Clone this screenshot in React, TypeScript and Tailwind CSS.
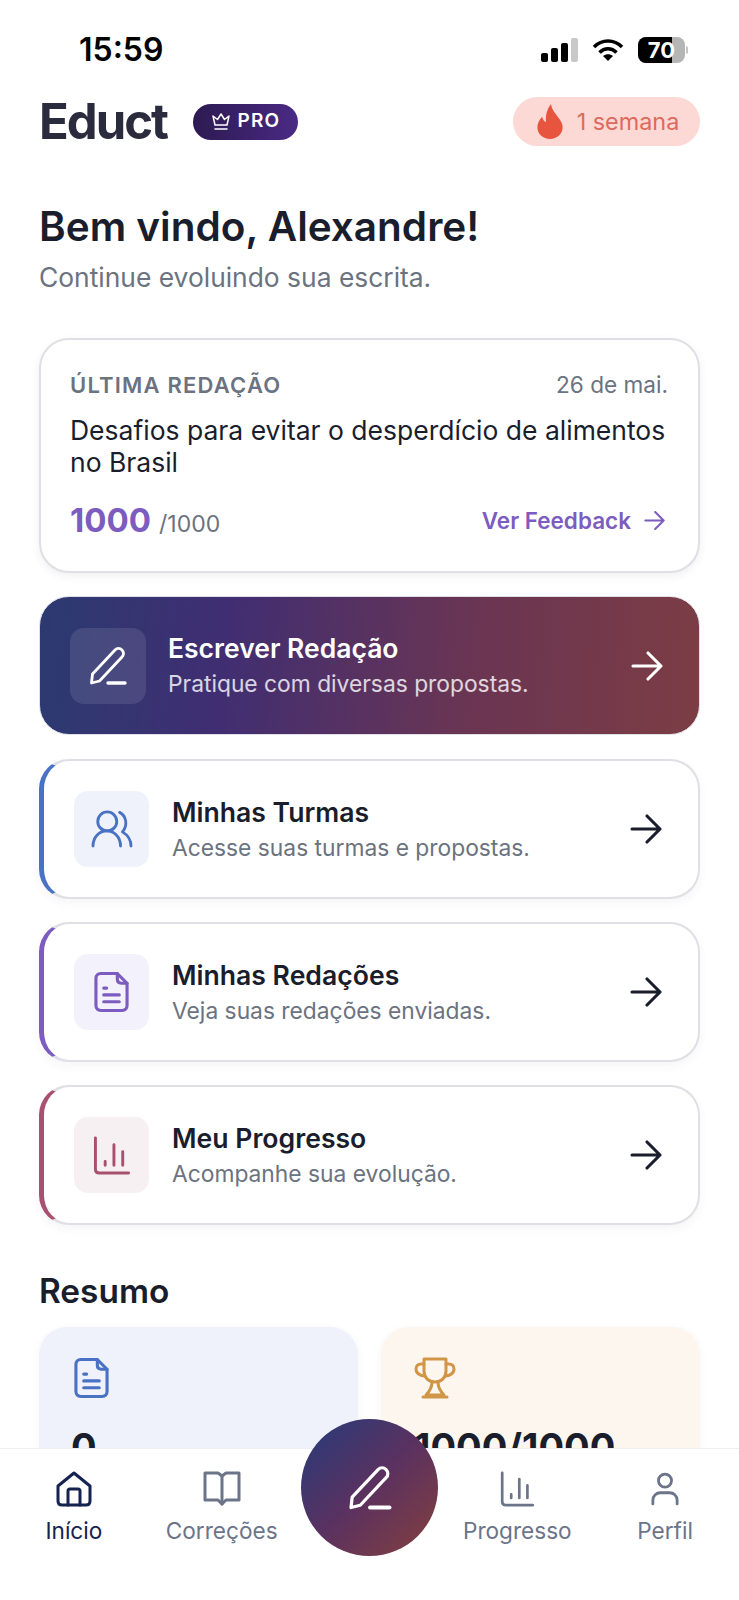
import React from "react";

const PenIcon = ({ className }: { className?: string }) => (
  <svg viewBox="0 0 40 40" fill="none" stroke="currentColor" strokeWidth="2.8" strokeLinecap="round" strokeLinejoin="round" className={className}>
    <path d="M3.5 37 L4.5 28 L27 4 C29 2 32 2 34 4 C36 6 36 9 34 11 L11.5 35 Z" />
    <path d="M20 37 H37" strokeWidth="3.4" />
  </svg>
);

const ArrowIcon = ({ className }: { className?: string }) => (
  <svg viewBox="0 0 32 32" fill="none" stroke="currentColor" strokeWidth="3.1" strokeLinecap="round" strokeLinejoin="round" className={className}>
    <path d="M2 16 H30 M17 3 L30 16 L17 29" />
  </svg>
);

const UsersIcon = ({ className }: { className?: string }) => (
  <svg viewBox="0 0 44 40" fill="none" stroke="currentColor" strokeWidth="3" strokeLinecap="round" strokeLinejoin="round" className={className}>
    <circle cx="17" cy="12" r="10" />
    <path d="M2 38 C2 28 9 22 16.5 22 C24 22 31 28 31 38" />
    <path d="M30 2.5 C37 6 39 16 33 23 C38 26 42 31 42 38" />
  </svg>
);

const FileIcon = ({ className }: { className?: string }) => (
  <svg viewBox="0 0 36 42" fill="none" stroke="currentColor" strokeWidth="3.2" strokeLinecap="round" strokeLinejoin="round" className={className}>
    <path d="M7 2 H24 L34 12 V35 C34 38 32 40 29 40 H7 C4 40 2 38 2 35 V7 C2 4 4 2 7 2 Z" />
    <path d="M24 2 V8 C24 10.5 25.5 12 28 12 H34" />
    <path d="M10 17 H13 M10 24 H26 M10 31 H26" />
  </svg>
);

const ChartIcon = ({ className }: { className?: string }) => (
  <svg viewBox="0 0 38 40" fill="none" stroke="currentColor" strokeWidth="3" strokeLinecap="round" strokeLinejoin="round" className={className}>
    <path d="M2 2 V34 C2 36.5 3.5 38 6 38 H36" />
    <path d="M12 26 V30 M21 9 V30 M30 16 V30" />
  </svg>
);

const HomeIcon = ({ className }: { className?: string }) => (
  <svg viewBox="0 0 36 36" fill="none" stroke="currentColor" strokeWidth="3" strokeLinecap="round" strokeLinejoin="round" className={className}>
    <path d="M2 15 L18 2 L34 15 V30 C34 32.5 32.5 34 30 34 H6 C3.5 34 2 32.5 2 30 Z" />
    <path d="M12 34 V20 C12 18.5 13 18 14 18 H22 C23 18 24 18.5 24 20 V34" />
  </svg>
);

const BookIcon = ({ className }: { className?: string }) => (
  <svg viewBox="0 0 38 36" fill="none" stroke="currentColor" strokeWidth="3" strokeLinecap="round" strokeLinejoin="round" className={className}>
    <path d="M2 2 H15 L19 5 L23 2 H36 V29 H23 L19 33 L15 29 H2 Z" />
    <path d="M19 5 V33" />
  </svg>
);

const UserIcon = ({ className }: { className?: string }) => (
  <svg viewBox="0 0 30 36" fill="none" stroke="currentColor" strokeWidth="3" strokeLinecap="round" strokeLinejoin="round" className={className}>
    <circle cx="15" cy="9" r="7" />
    <path d="M2 34 V30 C2 25 6 22 10 22 H20 C24 22 28 25 28 30 V34" />
  </svg>
);

const TrophyIcon = ({ className }: { className?: string }) => (
  <svg viewBox="0 0 42 42" fill="none" stroke="currentColor" strokeWidth="3" strokeLinecap="round" strokeLinejoin="round" className={className}>
    <path d="M10 2 H32 V14 C32 21 27 25 21 25 C15 25 10 21 10 14 Z" />
    <path d="M10 7 H7 C4 7 2 9 2 12 C2 16 6 19 11 19 M32 7 H35 C38 7 40 9 40 12 C40 16 36 19 31 19" />
    <path d="M18 25 C18 30 16 34 12 38 H30 C26 34 24 30 24 25" />
    <path d="M9 40 H33" />
  </svg>
);

const CrownIcon = ({ className }: { className?: string }) => (
  <svg viewBox="0 0 20 20" fill="none" stroke="currentColor" strokeWidth="1.5" strokeLinecap="round" strokeLinejoin="round" className={className}>
    <path d="M4 13 L2 4 L6.5 7.5 L10 2 L13.5 7.5 L18 4 L16 13 Z" />
    <path d="M4 17 H16" />
  </svg>
);

const FlameIcon = ({ className }: { className?: string }) => (
  <svg viewBox="0 0 28 36" fill="currentColor" className={className}>
    <path d="M15 0 C16 6 19 9 22 13 C25 17 27 20 27 24 C27 31 21 36 14 36 C7 36 1 31 1 24 C1 20 3 16 6 13 C6.5 16 8 18 10 18.5 C9 12 11 5 15 0 Z" />
  </svg>
);

const actions = [
  { title: "Minhas Turmas", subtitle: "Acesse suas turmas e propostas.", icon: UsersIcon, iconSize: "w-[42px] h-[38px]", border: "border-l-[#4a72c4]", tile: "bg-[#eff2fb]", color: "text-[#4a72c4]" },
  { title: "Minhas Redações", subtitle: "Veja suas redações enviadas.", icon: FileIcon, iconSize: "w-[35px] h-[42px]", border: "border-l-[#7c5cbf]", tile: "bg-[#f3f1fb]", color: "text-[#7c5cbf]" },
  { title: "Meu Progresso", subtitle: "Acompanhe sua evolução.", icon: ChartIcon, iconSize: "w-[38px] h-[39px]", border: "border-l-[#a8506f]", tile: "bg-[#f7f0f3]", color: "text-[#a8506f]" },
];

export default function App() {
  return (
    <div className="relative w-[739px] h-[1600px] overflow-hidden flex flex-col bg-white text-[#1a1d2b] font-['Inter',sans-serif]">
      <div className="flex-1 min-h-0 overflow-hidden px-[39px]">
        {/* status bar */}
        <div className="h-[97px] flex items-center justify-between pl-[40px] pr-[12px] pt-[3px]">
          <span className="text-[32px] font-semibold text-black">15:59</span>
          <div className="flex items-center gap-[14px]">
            <div className="flex items-end gap-[3px] h-[24px]">
              <span className="w-[7px] h-[9px] rounded-[2px] bg-black" />
              <span className="w-[7px] h-[14px] rounded-[2px] bg-black" />
              <span className="w-[7px] h-[19px] rounded-[2px] bg-black" />
              <span className="w-[7px] h-[24px] rounded-[2px] bg-[#c8c8c8]" />
            </div>
            <svg viewBox="0 0 32 24" className="w-[32px] h-[24px]" fill="none" stroke="black" strokeWidth="3.6">
              <path d="M2 9 C10 1 22 1 30 9" />
              <path d="M7.5 14.5 C12.5 9.5 19.5 9.5 24.5 14.5" />
              <path d="M16 23 L11 18 C14 15.5 18 15.5 21 18 Z" fill="black" stroke="none" />
            </svg>
            <div className="flex items-center gap-[1px]">
              <div className="relative w-[47px] h-[26px] rounded-[8px] overflow-hidden bg-[#b5b5b5] flex">
                <div className="w-[34px] h-full bg-black" />
                <span className="absolute inset-0 flex items-center justify-center text-white text-[22px] font-bold leading-none">70</span>
              </div>
              <span className="w-[2px] h-[8px] rounded-r-full bg-[#c4c4c4]" />
            </div>
          </div>
        </div>

        {/* header */}
        <div className="flex items-center justify-between h-[49px]">
          <div className="flex items-center gap-[26px]">
            <span className="text-[49px] font-bold tracking-[-2px] text-[#2a2b3d] leading-none">Educt</span>
            <div className="w-[105px] h-[36px] rounded-full bg-gradient-to-r from-[#2d1a52] to-[#4a2a85] flex items-center justify-center gap-[7px] text-white">
              <CrownIcon className="w-[20px] h-[20px]" />
              <span className="text-[19px] font-semibold tracking-[1.2px]">PRO</span>
            </div>
          </div>
          <div className="w-[187px] h-[49px] rounded-full bg-[#fdd9d5] flex items-center justify-center gap-[13px] pl-[2px]">
            <FlameIcon className="w-[28px] h-[35px] text-[#e8553f]" />
            <span className="text-[23.4px] text-[#dd6a5c]">1 semana</span>
          </div>
        </div>

        {/* welcome */}
        <h1 className="mt-[58px] text-[40.5px] leading-[46px] font-semibold text-[#1a1d2b]">Bem vindo, Alexandre!</h1>
        <p className="mt-[11px] text-[26.4px] leading-[33px] text-[#6b7280]">Continue evoluindo sua escrita.</p>

        {/* last essay */}
        <div className="mt-[44px] h-[235px] rounded-[30px] border-2 border-[#dfe0e6] bg-white pl-[29px] pr-[30px] pt-[30px] shadow-[0_3px_8px_rgba(60,60,90,0.08)]">
          <div className="flex items-center justify-between h-[30px]">
            <span className="text-[22px] font-semibold tracking-[1.2px] text-[#6b7280]">ÚLTIMA REDAÇÃO</span>
            <span className="text-[22.6px] text-[#6b7280]">26 de mai.</span>
          </div>
          <p className="mt-[14px] text-[26.5px] leading-[32px] text-[#1a1d2b]">Desafios para evitar o desperdício de alimentos no Brasil</p>
          <div className="mt-[18px] flex items-center justify-between">
            <div className="flex items-baseline gap-[8px]">
              <span className="text-[33px] font-bold text-[#7c5cbf]">1000</span>
              <span className="text-[23px] text-[#6b7280]">/1000</span>
            </div>
            <div className="flex items-center gap-[13px] pr-[3px] text-[#7c5cbf]">
              <span className="text-[22.5px] font-semibold">Ver Feedback</span>
              <ArrowIcon className="w-[21px] h-[21px]" />
            </div>
          </div>
        </div>

        {/* write essay */}
        <div className="mt-[23px] h-[139px] rounded-[30px] border border-[#dfe0e6] bg-[linear-gradient(95deg,#2b3a70_0%,#402e72_28%,#6a3553_65%,#7c3d44_100%)] pl-[30px] pr-[36px] flex items-center">
          <div className="w-[76px] h-[76px] rounded-[14px] bg-white/10 flex items-center justify-center text-white">
            <PenIcon className="w-[40px] h-[40px]" />
          </div>
          <div className="ml-[22px] flex-1">
            <div className="text-[26.5px] leading-[32px] font-semibold text-white">Escrever Redação</div>
            <div className="mt-[5px] text-[22.8px] leading-[30px] text-white/80">Pratique com diversas propostas.</div>
          </div>
          <ArrowIcon className="w-[32px] h-[32px] text-white" />
        </div>

        {/* action cards */}
        <div className="mt-[24px] flex flex-col gap-[23px]">
          {actions.map((a) => (
            <div
              key={a.title}
              className={`h-[140px] rounded-[30px] border-2 border-[#dfe0e6] border-l-[5px] ${a.border} bg-white pl-[30px] pr-[36px] flex items-center shadow-[0_4px_10px_rgba(60,60,90,0.05)]`}
            >
              <div className={`w-[75px] h-[76px] rounded-[14px] ${a.tile} ${a.color} flex items-center justify-center`}>
                <a.icon className={a.iconSize} />
              </div>
              <div className="ml-[23px] flex-1">
                <div className="text-[26.6px] leading-[32px] font-semibold text-[#1a1d2b]">{a.title}</div>
                <div className="mt-[5px] text-[22.8px] leading-[30px] text-[#6b7280]">{a.subtitle}</div>
              </div>
              <ArrowIcon className="w-[32px] h-[32px] text-[#1a1d2b]" />
            </div>
          ))}
        </div>

        {/* summary */}
        <h2 className="mt-[46px] text-[33.4px] leading-[40px] font-semibold text-[#1a1d2b]">Resumo</h2>
        <div className="mt-[16px] grid grid-cols-2 gap-[23px]">
          <div className="h-[220px] rounded-[28px] bg-[#eff2fb] pl-[32px] pt-[30px] shadow-[0_2px_8px_rgba(60,60,90,0.05)]">
            <FileIcon className="ml-[3px] w-[35px] h-[42px] text-[#4a72c4]" />
            <div className="mt-[25px] text-[38px] leading-[46px] font-bold text-[#1a1d2b]">0</div>
          </div>
          <div className="h-[220px] rounded-[28px] bg-[#fcf6ee] pl-[33px] pt-[30px] shadow-[0_2px_8px_rgba(60,60,90,0.05)]">
            <TrophyIcon className="w-[42px] h-[42px] text-[#d09546]" />
            <div className="mt-[25px] text-[38px] leading-[46px] font-bold text-[#1a1d2b]">1000/1000</div>
          </div>
        </div>
      </div>

      {/* bottom nav */}
      <nav className="relative z-10 h-[152px] shrink-0 border-t border-[#eceef2] bg-white pt-[22px] grid grid-cols-5">
        <div className="flex flex-col items-center text-[#14234f]">
          <HomeIcon className="w-[36px] h-[36px]" />
          <span className="mt-[9px] text-[22.6px] leading-[30px]">Início</span>
        </div>
        <div className="flex flex-col items-center text-[#6b7489]">
          <BookIcon className="w-[38px] h-[36px]" />
          <span className="mt-[9px] text-[22.6px] leading-[30px]">Correções</span>
        </div>
        <div />
        <div className="flex flex-col items-center text-[#6b7489]">
          <ChartIcon className="w-[35px] h-[36px]" />
          <span className="mt-[9px] text-[22.6px] leading-[30px]">Progresso</span>
        </div>
        <div className="flex flex-col items-center text-[#6b7489]">
          <UserIcon className="w-[28px] h-[36px]" />
          <span className="mt-[9px] text-[22.6px] leading-[30px]">Perfil</span>
        </div>
      </nav>

      {/* floating action button */}
      <div className="absolute z-20 left-[301px] top-[1419px] w-[137px] h-[137px] rounded-full bg-[linear-gradient(135deg,#2b3a78_5%,#5a3160_50%,#7c3d44_90%)] flex items-center justify-center text-white">
        <PenIcon className="w-[46px] h-[46px]" />
      </div>
    </div>
  );
}
